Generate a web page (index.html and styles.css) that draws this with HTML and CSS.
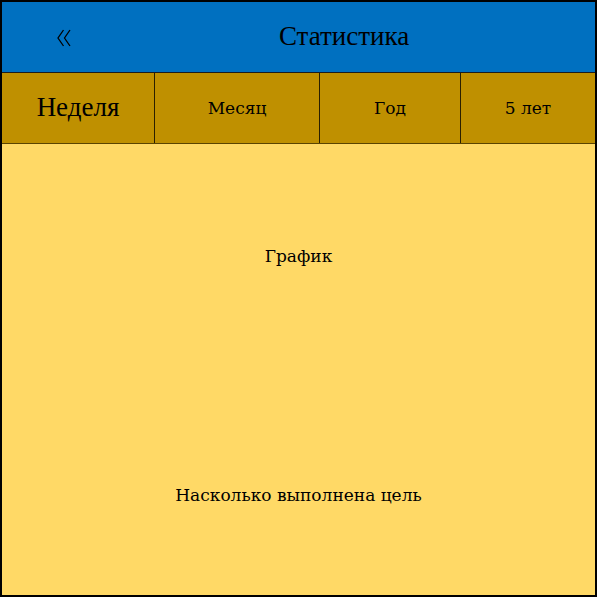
FILE: index.html
```html
<!DOCTYPE html>
<html lang="ru">
<head>
<meta charset="utf-8">
<title>Статистика</title>
<link rel="stylesheet" href="styles.css">
</head>
<body>
<div class="frame">
  <header class="header">
    <div class="back">
      <svg class="back-icon" width="16" height="18" viewBox="0 0 16 18" aria-label="Назад">
        <path d="M6.5 1 L1 9 L6.5 17" />
        <path d="M13 1 L7.5 9 L13 17" />
      </svg>
    </div>
    <div class="title">Статистика</div>
  </header>
  <nav class="tabs">
    <div class="tab tab-week">Неделя</div>
    <div class="tab tab-month">Месяц</div>
    <div class="tab tab-year">Год</div>
    <div class="tab tab-5y">5 лет</div>
  </nav>
  <main class="content">
    <div class="graph">График</div>
    <div class="goal">Насколько выполнена цель</div>
  </main>
</div>
</body>
</html>
```
FILE: styles.css
```css
html, body {
  margin: 0;
  padding: 0;
}
.frame {
  width: 597px;
  height: 597px;
  box-sizing: border-box;
  border: 2px solid #000;
  display: flex;
  flex-direction: column;
  font-family: "Liberation Serif", serif;
  color: #000;
}
.header {
  height: 71px;
  box-sizing: border-box;
  background: #0070c0;
  border-bottom: 1px solid #1c1c1c;
  display: grid;
  grid-template-columns: 91px 1fr;
  align-items: center;
}
.back {
  padding-left: 55px;
  display: flex;
  align-items: center;
  padding-top: 2px;
}
.back-icon {
  display: block;
}
.back-icon path {
  fill: none;
  stroke: #000;
  stroke-width: 1.3;
}
.title {
  text-align: center;
  font-size: 27px;
  padding-bottom: 2px;
}
.tabs {
  height: 71px;
  box-sizing: border-box;
  background: #bf9000;
  border-bottom: 1px solid #5a4400;
  display: flex;
}
.tab {
  display: flex;
  align-items: center;
  justify-content: center;
  font-family: "DejaVu Serif", serif;
  font-size: 17px;
  border-right: 1px solid #2a2000;
  padding-bottom: 1px;
}
.tab-week {
  width: 152px;
  font-family: "Liberation Serif", serif;
  font-size: 27px;
}
.tab-month { width: 164px; }
.tab-year { width: 140px; }
.tab-5y { flex: 1; border-right: none; }
.content {
  flex: 1;
  background: #ffd966;
  display: flex;
  flex-direction: column;
  align-items: center;
  padding-top: 100px;
  font-family: "DejaVu Serif", serif;
  font-size: 17px;
}
.graph {
  line-height: 24px;
}
.goal {
  line-height: 24px;
  margin-top: 215px;
}
```
